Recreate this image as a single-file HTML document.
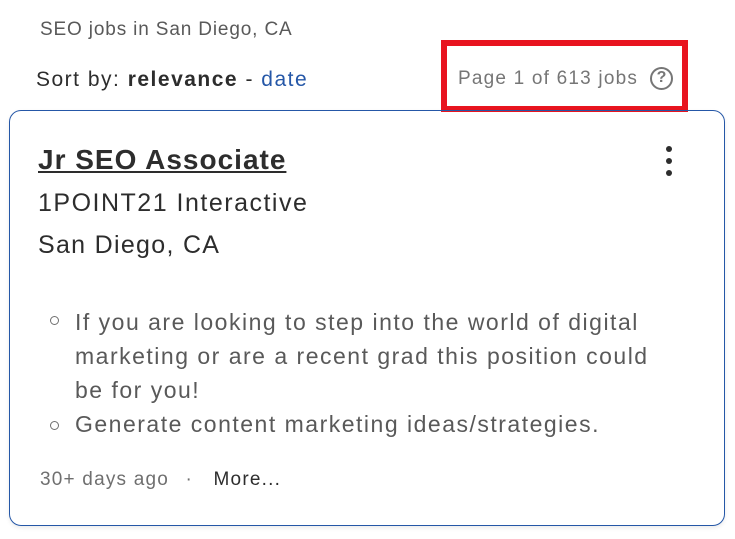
<!DOCTYPE html>
<html><head><style>
body{margin:0;width:735px;height:539px;background:#fff;font-family:"Liberation Sans",sans-serif;position:relative;overflow:hidden}
.a{position:absolute;white-space:nowrap}
</style></head><body>
<div class="a" style="left:40px;top:19px;font-size:19px;color:#595959;letter-spacing:0.85px">SEO jobs in San Diego, CA</div>
<div class="a" style="left:36px;top:68px;font-size:21px;color:#2d2d2d;letter-spacing:1.5px">Sort by: <b>relevance</b> - <span style="color:#2557a7">date</span></div>
<div class="a" style="left:441px;top:40px;width:235px;height:60px;border:6px solid #e8141f;"></div>
<div class="a" style="left:458px;top:68px;font-size:19px;color:#767676;letter-spacing:1.2px">Page 1 of 613 jobs</div>
<div class="a" style="left:650px;top:67px;width:23px;height:23px;border:2.5px solid #767676;border-radius:50%;box-sizing:border-box;font-size:16px;font-weight:bold;color:#767676;text-align:center;line-height:18px">?</div>
<div class="a" style="left:9px;top:110px;width:714px;height:414px;border:1px solid #2557a7;border-radius:12px;box-shadow:0 2px 4px rgba(0,0,0,.08)"></div>
<div class="a" style="left:38px;top:144px;font-size:28px;font-weight:bold;color:#2d2d2d;text-decoration:underline;letter-spacing:1px">Jr SEO Associate</div>
<div class="a" style="left:666px;top:146px;width:6px;height:6px;border-radius:50%;background:#2d2d2d"></div>
<div class="a" style="left:666px;top:158px;width:6px;height:6px;border-radius:50%;background:#2d2d2d"></div>
<div class="a" style="left:666px;top:170px;width:6px;height:6px;border-radius:50%;background:#2d2d2d"></div>
<div class="a" style="left:38px;top:189px;font-size:25px;color:#2d2d2d;letter-spacing:1.5px">1POINT21 Interactive</div>
<div class="a" style="left:38px;top:231px;font-size:25px;color:#2d2d2d;letter-spacing:1.3px">San Diego, CA</div>
<div class="a" style="left:50px;top:316px;width:7px;height:7px;border:1.5px solid #6f6f6f;border-radius:50%"></div>
<div class="a" style="left:50px;top:421px;width:7px;height:7px;border:1.5px solid #6f6f6f;border-radius:50%"></div>
<div class="a" style="left:75px;top:305px;font-size:23px;line-height:34px;color:#595959;letter-spacing:1.5px">If you are looking to step into the world of digital<br>marketing or are a recent grad this position could<br>be for you!<br>Generate content marketing ideas/strategies.</div>
<div class="a" style="left:40px;top:469px;font-size:19px;color:#6f6f6f;letter-spacing:1.2px">30+ days ago <span style="margin:0 14px 0 10px">·</span> <span style="color:#2d2d2d">More...</span></div>
</body></html>
